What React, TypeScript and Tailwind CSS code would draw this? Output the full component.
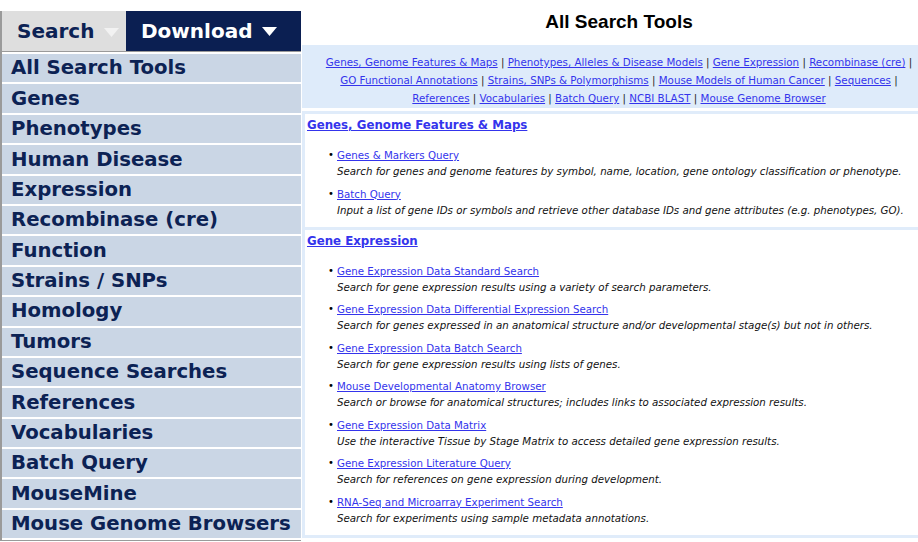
const menu = [
  'All Search Tools',
  'Genes',
  'Phenotypes',
  'Human Disease',
  'Expression',
  'Recombinase (cre)',
  'Function',
  'Strains / SNPs',
  'Homology',
  'Tumors',
  'Sequence Searches',
  'References',
  'Vocabularies',
  'Batch Query',
  'MouseMine',
  'Mouse Genome Browsers',
];

// each line of quick links; trailing flag = line ends with a pipe
const navLines: [string[], boolean][] = [
  [['Genes, Genome Features & Maps', 'Phenotypes, Alleles & Disease Models', 'Gene Expression', 'Recombinase (cre)'], true],
  [['GO Functional Annotations', 'Strains, SNPs & Polymorphisms', 'Mouse Models of Human Cancer', 'Sequences'], true],
  [['References', 'Vocabularies', 'Batch Query', 'NCBI BLAST', 'Mouse Genome Browser'], false],
];

const sections = [
  {
    title: 'Genes, Genome Features & Maps',
    items: [
      ['Genes & Markers Query', 'Search for genes and genome features by symbol, name, location, gene ontology classification or phenotype.'],
      ['Batch Query', 'Input a list of gene IDs or symbols and retrieve other database IDs and gene attributes (e.g. phenotypes, GO).'],
    ],
  },
  {
    title: 'Gene Expression',
    items: [
      ['Gene Expression Data Standard Search', 'Search for gene expression results using a variety of search parameters.'],
      ['Gene Expression Data Differential Expression Search', 'Search for genes expressed in an anatomical structure and/or developmental stage(s) but not in others.'],
      ['Gene Expression Data Batch Search', 'Search for gene expression results using lists of genes.'],
      ['Mouse Developmental Anatomy Browser', 'Search or browse for anatomical structures; includes links to associated expression results.'],
      ['Gene Expression Data Matrix', 'Use the interactive Tissue by Stage Matrix to access detailed gene expression results.'],
      ['Gene Expression Literature Query', 'Search for references on gene expression during development.'],
      ['RNA-Seq and Microarray Experiment Search', 'Search for experiments using sample metadata annotations.'],
    ],
  },
];

function Caret({ className }: { className: string }) {
  return (
    <svg className={className} width="15" height="9" viewBox="0 0 15 9">
      <path d="M0 0h15L7.5 9z" fill="currentColor" />
    </svg>
  );
}

export default function App() {
  return (
    <div className="flex w-[918px] h-[542px] bg-white overflow-hidden font-['Verdana','DejaVu_Sans',sans-serif]">
      {/* Sidebar */}
      <aside className="w-[301px] shrink-0 pt-[11px] flex flex-col">
        <div className="flex h-[40px] border-l-2 border-[#9a9a9a]">
          <div className="w-[124px] bg-[#dedede] flex items-center pl-[15px] gap-[10px] text-[20px] font-bold text-[#0c2254]">
            Search
            <Caret className="text-[#f2f2f2] mt-[2px]" />
          </div>
          <div className="flex-1 bg-[#0b1f52] flex items-center pl-[15px] gap-[10px] text-[20px] font-bold text-white">
            Download
            <Caret className="text-white mt-[1px]" />
          </div>
        </div>
        <div className="border-l-2 border-t border-b border-[#9a9a9a] pt-[2px]">
          {menu.map((m) => (
            <div
              key={m}
              className="h-[30.4px] bg-[#cad6e5] border-b-2 border-white flex items-center pl-[9px] text-[19.7px] font-bold text-[#0c2254] leading-none whitespace-nowrap"
            >
              {m}
            </div>
          ))}
        </div>
      </aside>

      {/* Content (wider than the window, cut off at the right) */}
      <main className="w-[635px] shrink-0 pl-[1px]">
        <h1 className="h-[45px] flex items-center justify-center text-[19px] font-bold text-black font-['Liberation_Sans',Arial,sans-serif]">
          All Search Tools
        </h1>
        <div className="bg-[#deebfa] h-[63px] pt-[8px] flex flex-col items-center text-[10.3px] leading-[18px] text-[#222]">
          {navLines.map(([links, trailing], i) => (
            <div key={i} className="whitespace-nowrap">
              {links.map((l, j) => (
                <span key={l}>
                  <a href="#" className="text-[#3434ec] underline">{l}</a>
                  {(j < links.length - 1 || trailing) && ' | '}
                </span>
              ))}
            </div>
          ))}
        </div>
        <div className="mt-[3px] flex flex-col">
          {sections.map((s, i) => (
            <section
              key={s.title}
              className={`border-x-[3px] border-t-[3px] border-[#e0ecfa] bg-white pl-[2px] pt-[3px] pb-[9px] ${i === sections.length - 1 ? 'border-b-[3px]' : ''}`}
            >
              <a href="#" className="block leading-[16px] text-[11.8px] font-bold text-[#3434ec] underline">{s.title}</a>
              <ul className="mt-[14px] pl-[21px] flex flex-col gap-[6.5px]">
                {s.items.map(([t, d]) => (
                  <li key={t} className="flex text-[10.25px] leading-[16px] whitespace-nowrap">
                    <span className="w-[9px] text-[10px] text-black">•</span>
                    <div>
                      <a href="#" className="text-[#3434ec] underline">{t}</a>
                      <div className="italic text-[#111]">{d}</div>
                    </div>
                  </li>
                ))}
              </ul>
            </section>
          ))}
        </div>
      </main>
    </div>
  );
}
